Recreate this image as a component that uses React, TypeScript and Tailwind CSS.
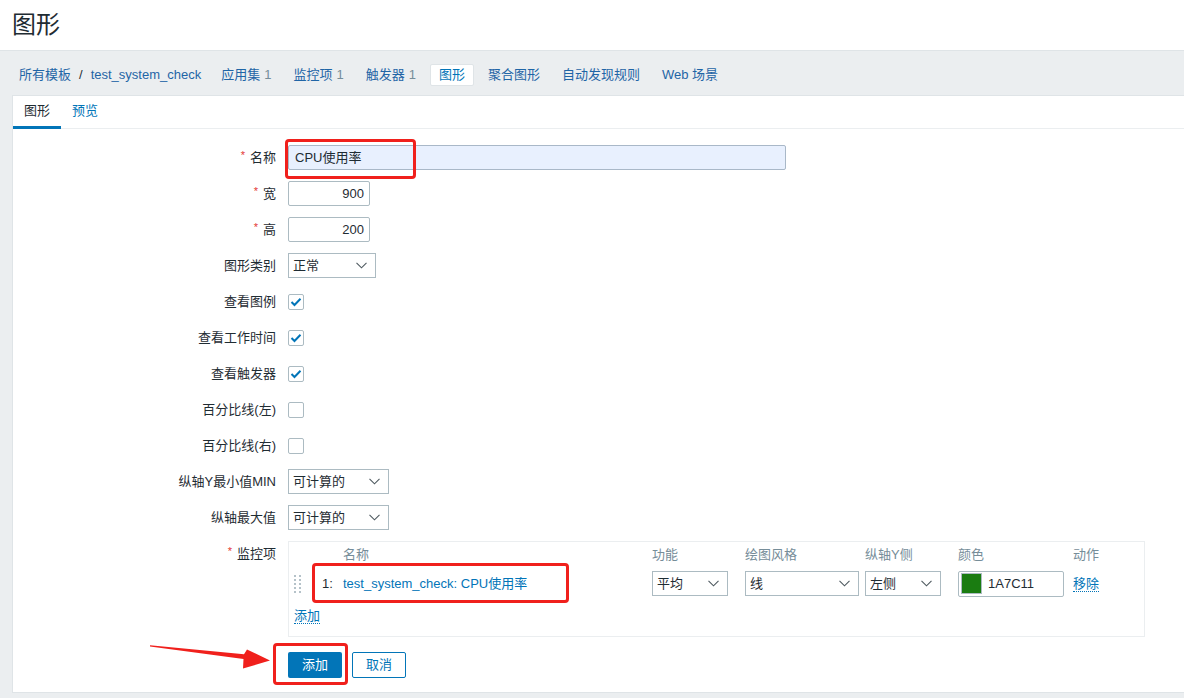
import React from 'react';

const font = "font-['Liberation_Sans','Noto_Sans_CJK_SC',sans-serif]";

function Chevron() {
  return (
    <svg width="11" height="7" viewBox="0 0 11 7" className="shrink-0">
      <polyline points="0.5,0.8 5.5,5.8 10.5,0.8" fill="none" stroke="#4f5a60" strokeWidth="1.1" />
    </svg>
  );
}

function Select({ value, width }: { value: string; width: string }) {
  return (
    <div className={`${width} h-[25px] border border-[#acbbc2] bg-white flex items-center justify-between pl-[4px] pr-[8px] text-[#1f2c33]`}>
      <span>{value}</span>
      <Chevron />
    </div>
  );
}

function Checkbox({ checked }: { checked?: boolean }) {
  return (
    <div className="w-[16px] h-[16px] border border-[#acbbc2] rounded-[2px] bg-white flex items-center justify-center">
      {checked && (
        <svg width="12" height="10" viewBox="0 0 12 10">
          <polyline points="1.5,5 4.5,8 10.5,1.8" fill="none" stroke="#0275b8" strokeWidth="2" />
        </svg>
      )}
    </div>
  );
}

function Row({ label, required, children, top }: { label: string; required?: boolean; children: React.ReactNode; top?: boolean }) {
  return (
    <div className={`flex ${top ? 'items-start' : 'items-center'} h-[25px] ${top ? 'h-auto' : ''}`}>
      <div className="w-[275px] h-[25px] pr-[12px] flex items-center justify-end text-[#1f2c33]">
        {required && <span className="text-[#e33734] text-[11px] mr-[5px] -mt-[4px]">*</span>}
        {label}
      </div>
      {children}
    </div>
  );
}

function DragHandle() {
  return (
    <div className="grid grid-cols-2 gap-x-[3px] gap-y-[2px] w-[7px]">
      {Array.from({ length: 10 }).map((_, i) => (
        <span key={i} className="w-[2px] h-[2px] bg-[#b5c2c9]" />
      ))}
    </div>
  );
}

const navItems = [
  { text: '应用集', count: '1' },
  { text: '监控项', count: '1' },
  { text: '触发器', count: '1' },
  { text: '图形', active: true },
  { text: '聚合图形' },
  { text: '自动发现规则' },
  { text: 'Web 场景' },
];

export default function App() {
  return (
    <div className={`relative w-[1184px] h-[698px] overflow-hidden bg-[#ebeef0] text-[13px] ${font}`}>
      {/* page title */}
      <header className="h-[51px] bg-white border-b border-[#dfe4e7] pl-[12px] flex items-center">
        <h1 className="text-[24px] leading-none text-[#1f2c33]">图形</h1>
      </header>

      {/* breadcrumbs + host nav */}
      <nav className="h-[44px] pt-[13px] flex items-start pl-[19px] text-[#1f65a6]">
        <div className="h-[22px] flex items-center">
          <span>所有模板</span>
          <span className="mx-[8px] text-[#1f2c33]">/</span>
          <span>test_system_check</span>
        </div>
        <div className="flex items-center gap-[6px] ml-[12px]">
          {navItems.map((it) => (
            <div
              key={it.text}
              className={`h-[22px] px-[8px] flex items-center rounded-[2px] ${it.active ? 'bg-white border border-[#dfe4e7] text-[#0275b8] px-[7px]' : ''}`}
            >
              {it.text}
              {it.count && <span className="ml-[4px] text-[#768d99]">{it.count}</span>}
            </div>
          ))}
        </div>
      </nav>

      {/* main panel */}
      <div className="ml-[12px] h-[598px] bg-white border-l border-t border-b border-[#dfe4e7]">
        <div className="h-[33px] border-b border-[#ebeef0] flex items-start">
          <div className="h-[33px] px-[11px] flex items-center border-b-[3px] border-[#0275b8] text-[#1f2c33]">图形</div>
          <div className="h-[30px] px-[11px] flex items-center text-[#0275b8]">预览</div>
        </div>

        <div className="pt-[16px] flex flex-col gap-[11px]">
          <Row label="名称" required>
            <div className="w-[498px] h-[25px] border border-[#a9b8c8] rounded-[2px] bg-[#e8f0fe] flex items-center pl-[6px] text-[#1f2c33]">
              CPU使用率
            </div>
          </Row>
          <Row label="宽" required>
            <div className="w-[82px] h-[25px] border border-[#acbbc2] rounded-[2px] bg-white flex items-center justify-end pr-[5px] text-[#1f2c33]">900</div>
          </Row>
          <Row label="高" required>
            <div className="w-[82px] h-[25px] border border-[#acbbc2] rounded-[2px] bg-white flex items-center justify-end pr-[5px] text-[#1f2c33]">200</div>
          </Row>
          <Row label="图形类别">
            <Select value="正常" width="w-[88px]" />
          </Row>
          <Row label="查看图例">
            <Checkbox checked />
          </Row>
          <Row label="查看工作时间">
            <Checkbox checked />
          </Row>
          <Row label="查看触发器">
            <Checkbox checked />
          </Row>
          <Row label="百分比线(左)">
            <Checkbox />
          </Row>
          <Row label="百分比线(右)">
            <Checkbox />
          </Row>
          <Row label="纵轴Y最小值MIN">
            <Select value="可计算的" width="w-[101px]" />
          </Row>
          <Row label="纵轴最大值">
            <Select value="可计算的" width="w-[101px]" />
          </Row>
          <Row label="监控项" required top>
            <div className="w-[857px] h-[96px] border border-[#ebeef0] pl-[5px] pt-[3px]">
              <div className="h-[20px] flex items-center text-[#768d99]">
                <span className="w-[49px]" />
                <span className="w-[309px]">名称</span>
                <span className="w-[93px]">功能</span>
                <span className="w-[120px]">绘图风格</span>
                <span className="w-[93px]">纵轴Y侧</span>
                <span className="w-[115px]">颜色</span>
                <span>动作</span>
              </div>
              <div className="mt-[6px] h-[25px] flex items-center">
                <span className="w-[28px] flex items-center">
                  <DragHandle />
                </span>
                <span className="w-[21px] text-[#1f2c33]">1:</span>
                <span className="w-[309px] text-[#0275b8]">test_system_check: CPU使用率</span>
                <span className="w-[93px]"><Select value="平均" width="w-[76px]" /></span>
                <span className="w-[120px]"><Select value="线" width="w-[114px]" /></span>
                <span className="w-[93px]"><Select value="左侧" width="w-[76px]" /></span>
                <span className="w-[115px]">
                  <div className="w-[106px] h-[26px] border border-[#acbbc2] rounded-[2px] flex items-center pl-[2px] text-[#1f2c33]">
                    <span className="w-[21px] h-[21px] bg-[#1A7C11] border border-[#acbbc2]" />
                    <span className="ml-[6px]">1A7C11</span>
                  </div>
                </span>
                <span className="text-[#0275b8] border-b border-dotted border-[#0275b8] leading-[15px]">移除</span>
              </div>
              <div className="mt-[10px]">
                <span className="text-[#0275b8] border-b border-dotted border-[#0275b8] leading-[15px]">添加</span>
              </div>
            </div>
          </Row>
          <div className="flex items-center gap-[10px] pl-[275px] mt-[4px]">
            <button className="w-[54px] h-[26px] rounded-[2px] bg-[#0275b8] text-white">添加</button>
            <button className="w-[54px] h-[26px] rounded-[2px] bg-white border border-[#0275b8] text-[#0275b8]">取消</button>
          </div>
        </div>
      </div>

      {/* annotations */}
      <div className="absolute left-[285px] top-[139px] w-[131px] h-[40px] border-[3px] border-[#f0201c] rounded-[4px]" />
      <div className="absolute left-[312px] top-[563px] w-[257px] h-[40px] border-[3px] border-[#f0201c] rounded-[4px]" />
      <div className="absolute left-[273px] top-[643px] w-[75px] h-[42px] border-[3px] border-[#f0201c] rounded-[4px]" />
      <svg className="absolute left-0 top-0" width="1184" height="698" viewBox="0 0 1184 698">
        <polygon
          points="150,645.3 244,654.2 247,649.5 270,660.5 243,668.5 243.5,659 150,646.6"
          fill="#f0201c"
        />
      </svg>
    </div>
  );
}
